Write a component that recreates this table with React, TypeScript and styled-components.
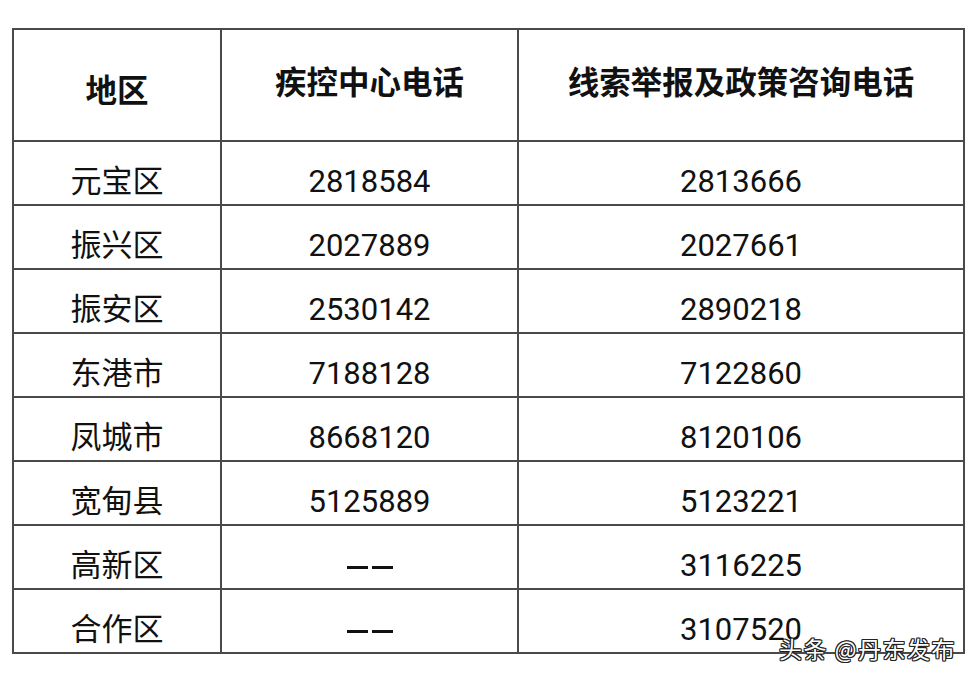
import React from 'react'
import styled, { createGlobalStyle } from 'styled-components'

const GlobalStyle = createGlobalStyle`
  html, body {
    margin: 0;
    padding: 0;
    background: #ffffff;
  }
  body {
    font-family: Roboto, "Noto Sans CJK SC", sans-serif;
    color: #111111;
  }
`

const rows: { area: string, cdc: string, hotline: string }[] = [
    { area: '元宝区', cdc: '2818584', hotline: '2813666' },
    { area: '振兴区', cdc: '2027889', hotline: '2027661' },
    { area: '振安区', cdc: '2530142', hotline: '2890218' },
    { area: '东港市', cdc: '7188128', hotline: '7122860' },
    { area: '凤城市', cdc: '8668120', hotline: '8120106' },
    { area: '宽甸县', cdc: '5125889', hotline: '5123221' },
    { area: '高新区', cdc: '', hotline: '3116225' },
    { area: '合作区', cdc: '', hotline: '3107520' },
]

export default function App() {
    return <Page>
        <GlobalStyle />
        <Table>
            <colgroup>
                <col style={{ width: 208 }} />
                <col style={{ width: 297 }} />
                <col style={{ width: 446 }} />
            </colgroup>
            <thead>
                <Row $height={112}>
                    <HeadCell $low>地区</HeadCell>
                    <HeadCell>疾控中心电话</HeadCell>
                    <HeadCell>线索举报及政策咨询电话</HeadCell>
                </Row>
            </thead>
            <tbody>
                {rows.map(r =>
                    <Row key={r.area} $height={64}>
                        <Cell>{r.area}</Cell>
                        <Cell>{r.cdc || <Dashes><Dash /><Dash /></Dashes>}</Cell>
                        <Cell>{r.hotline}</Cell>
                    </Row>
                )}
            </tbody>
        </Table>
        <Watermark>头条 @丹东发布</Watermark>
    </Page>
}

const Page = styled.div`
  position: relative;
  width: 980px;
  height: 679px;
  padding: 28px 0 0 12px;
  box-sizing: border-box;
  overflow: hidden;
`

const Table = styled.table`
  border-collapse: collapse;
  table-layout: fixed;
  width: 952px;
`

const Row = styled.tr<{ $height: number }>`
  height: ${p => p.$height}px;
`

// first header cell sits a little lower than the other two
const HeadCell = styled.th<{ $low?: boolean }>`
  padding: ${p => p.$low ? '8px 0 0' : '0 0 8px'};
  border: 2px solid #4a4a4a;
  font-family: "Noto Sans CJK SC", sans-serif;
  font-size: 31.5px;
  font-weight: 700;
  text-align: center;
  vertical-align: middle;
  line-height: 1;
`

const Cell = styled.td`
  padding: 16px 0 0;
  border: 2px solid #4a4a4a;
  font-family: Roboto, "Noto Sans CJK SC", sans-serif;
  font-size: 31px;
  text-align: center;
  vertical-align: middle;
  line-height: 1;
`

const Dashes = styled.span`
  display: inline-flex;
  gap: 4px;
  vertical-align: middle;
`

const Dash = styled.span`
  display: block;
  width: 21px;
  height: 3px;
  background: #111111;
`

const Watermark = styled.div`
  position: absolute;
  left: 779px;
  top: 631px;
  font-family: "Noto Sans CJK SC", sans-serif;
  font-size: 23px;
  color: #ffffff;
  letter-spacing: 1.5px;
  text-shadow: 1px 0 0 #222, -1px 0 0 #222, 0 1px 0 #222, 0 -1px 0 #222,
    1px 1px 0 #222, -1px -1px 0 #222, 1px -1px 0 #222, -1px 1px 0 #222;
`
